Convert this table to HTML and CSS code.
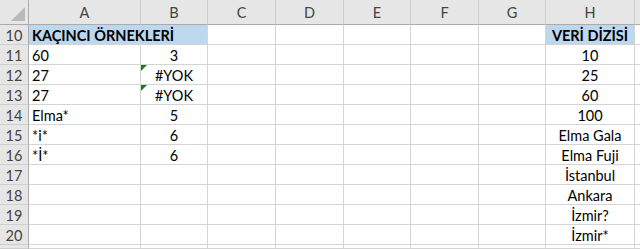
FILE: index.html
```html
<!DOCTYPE html>
<html lang="tr">
<head>
<meta charset="utf-8">
<title>Sheet</title>
<link rel="stylesheet" href="styles.css">
</head>
<body>
<div class="sheet">
  <div class="corner"><span class="tri"></span></div>
  <div class="ch">A</div><div class="ch">B</div><div class="ch">C</div><div class="ch">D</div><div class="ch">E</div><div class="ch">F</div><div class="ch">G</div><div class="ch">H</div><div class="ch"></div>

  <div class="rh">10</div><div class="c fill bold span2">KAÇINCI ÖRNEKLERİ</div><div class="c"></div><div class="c"></div><div class="c"></div><div class="c"></div><div class="c"></div><div class="c fill bold mid">VERİ DİZİSİ</div><div class="c"></div>

  <div class="rh">11</div><div class="c">60</div><div class="c mid">3</div><div class="c"></div><div class="c"></div><div class="c"></div><div class="c"></div><div class="c"></div><div class="c mid">10</div><div class="c"></div>

  <div class="rh">12</div><div class="c">27</div><div class="c mid err">#YOK</div><div class="c"></div><div class="c"></div><div class="c"></div><div class="c"></div><div class="c"></div><div class="c mid">25</div><div class="c"></div>

  <div class="rh">13</div><div class="c">27</div><div class="c mid err">#YOK</div><div class="c"></div><div class="c"></div><div class="c"></div><div class="c"></div><div class="c"></div><div class="c mid">60</div><div class="c"></div>

  <div class="rh">14</div><div class="c">Elma*</div><div class="c mid">5</div><div class="c"></div><div class="c"></div><div class="c"></div><div class="c"></div><div class="c"></div><div class="c mid">100</div><div class="c"></div>

  <div class="rh">15</div><div class="c">*i*</div><div class="c mid">6</div><div class="c"></div><div class="c"></div><div class="c"></div><div class="c"></div><div class="c"></div><div class="c mid">Elma Gala</div><div class="c"></div>

  <div class="rh">16</div><div class="c">*İ*</div><div class="c mid">6</div><div class="c"></div><div class="c"></div><div class="c"></div><div class="c"></div><div class="c"></div><div class="c mid">Elma Fuji</div><div class="c"></div>

  <div class="rh">17</div><div class="c"></div><div class="c"></div><div class="c"></div><div class="c"></div><div class="c"></div><div class="c"></div><div class="c"></div><div class="c mid">İstanbul</div><div class="c"></div>

  <div class="rh">18</div><div class="c"></div><div class="c"></div><div class="c"></div><div class="c"></div><div class="c"></div><div class="c"></div><div class="c"></div><div class="c mid">Ankara</div><div class="c"></div>

  <div class="rh">19</div><div class="c"></div><div class="c"></div><div class="c"></div><div class="c"></div><div class="c"></div><div class="c"></div><div class="c"></div><div class="c mid">İzmir?</div><div class="c"></div>

  <div class="rh">20</div><div class="c"></div><div class="c"></div><div class="c"></div><div class="c"></div><div class="c"></div><div class="c"></div><div class="c"></div><div class="c mid">İzmir*</div><div class="c"></div>

  <div class="rh"></div><div class="c"></div><div class="c"></div><div class="c"></div><div class="c"></div><div class="c"></div><div class="c"></div><div class="c"></div><div class="c"></div><div class="c"></div>
</div>
</body>
</html>
```
FILE: styles.css
```css
html, body {
  margin: 0;
  padding: 0;
  background: #ffffff;
  overflow: hidden;
}
body {
  width: 640px;
  height: 249px;
}
.sheet {
  display: grid;
  grid-template-columns: 29px 112px 67px 68px 68px 67px 68px 67px 89px 1fr;
  grid-template-rows: 25px repeat(11, 20px) 4px;
  font-family: Lato, "Open Sans", sans-serif;
  font-size: 14.5px;
  color: #000;
}
.sheet > div {
  box-sizing: border-box;
  overflow: visible;
  white-space: nowrap;
}
.corner {
  background: #e6e6e6;
  border-right: 1px solid #ababab;
  border-bottom: 1px solid #ababab;
  position: relative;
}
.tri {
  position: absolute;
  right: 3px;
  bottom: 3px;
  width: 0;
  height: 0;
  border-left: 14px solid transparent;
  border-bottom: 14px solid #b9b9b9;
}
.ch {
  background: #e6e6e6;
  border-right: 1px solid #cfcfcf;
  border-bottom: 1px solid #ababab;
  color: #444;
  display: flex;
  align-items: center;
  justify-content: center;
  padding-top: 1px;
  font-size: 14.5px;
}
.rh {
  background: #e6e6e6;
  border-right: 1px solid #ababab;
  border-bottom: 1px solid #cfcfcf;
  color: #444;
  display: flex;
  align-items: center;
  justify-content: center;
  padding-top: 1px;
  overflow: hidden;
}
.c {
  border-right: 1px solid #d4d4d4;
  border-bottom: 1px solid #d4d4d4;
  display: flex;
  align-items: center;
  padding: 1px 3px 0;
  position: relative;
}
.mid {
  justify-content: center;
}
.fill {
  background: #bdd7ee;
}
.bold {
  font-weight: 700;
}
.span2 {
  grid-column: span 2;
}
.err::before {
  content: "";
  position: absolute;
  left: 0;
  top: 0;
  width: 0;
  height: 0;
  border-top: 6px solid #1f7a1f;
  border-right: 6px solid transparent;
}
```
